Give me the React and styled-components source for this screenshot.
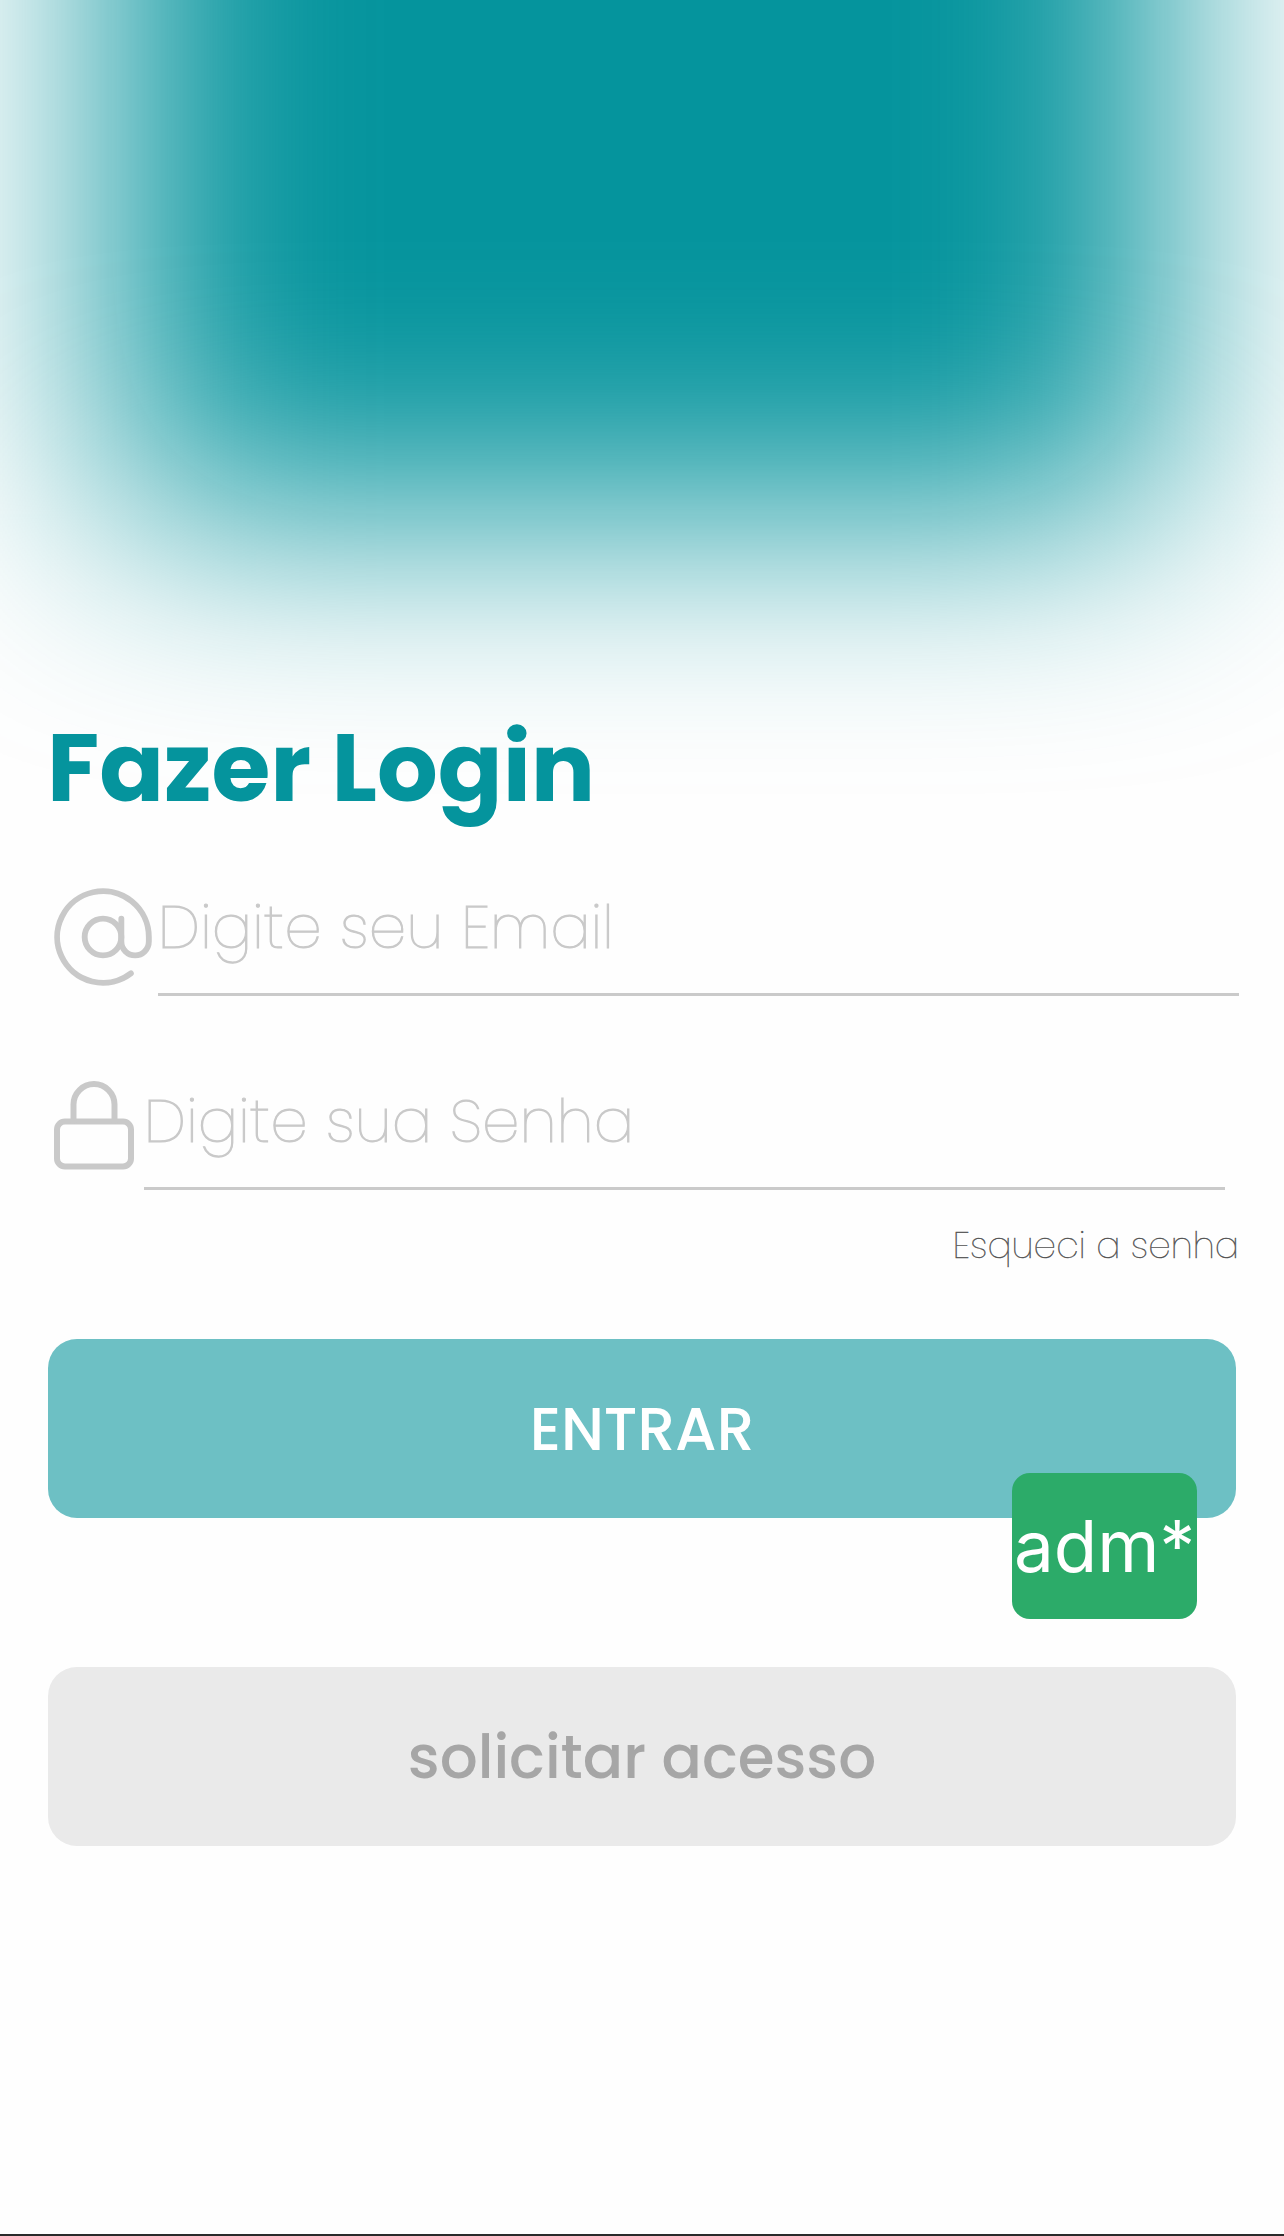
import React from "react";
import styled, { createGlobalStyle } from "styled-components";

const GlobalStyle = createGlobalStyle`
  *, *::before, *::after { box-sizing: border-box; }
  html, body { margin: 0; padding: 0; background: #fff; }
  button { border: 0; padding: 0; font: inherit; cursor: pointer; }
`;

const Page = styled.main`
  position: relative;
  isolation: isolate;
  overflow: hidden;
  width: 1284px;
  height: 2236px;
  padding: 708px 45px 0 48px;
  display: flex;
  flex-direction: column;
  background: #fefefe;
  border-bottom: 2px solid #2a2a2a;
  font-family: Poppins, Inter, "Liberation Sans", sans-serif;
  white-space: nowrap;
`;

const Glow = styled.div`
  position: absolute;
  z-index: -1;
  top: -500px;
  left: 112px;
  width: 1052px;
  height: 1014px;
  background: #05949d;
  filter: blur(117px);
`;

const Title = styled.h1`
  margin: 0 0 54px -1px;
  font-size: 95.5px;
  line-height: 120px;
  font-weight: 700;
  color: #05949d;
`;

const Fields = styled.div`
  display: flex;
  flex-direction: column;
  gap: 80px;
`;

const FieldRow = styled.label`
  display: flex;
  height: 114px;
  color: #c9c9c9;
`;

const FieldText = styled.span`
  width: 1080.5px;
  padding-top: 5px;
  border-bottom: 3px solid #cacaca;
  font-size: 59.8px;
  line-height: 80px;
  font-weight: 200;
  letter-spacing: 0.25px;
  -webkit-text-stroke: 1.1px currentColor;
`;

const Icon = styled.svg`
  flex: none;
  display: block;
  fill: none;
  stroke: currentColor;
  stroke-linecap: round;
  stroke-linejoin: round;
`;

const Forgot = styled.a`
  align-self: flex-end;
  margin: 31px 0 68px;
  font-size: 35.8px;
  line-height: 50px;
  font-weight: 200;
  letter-spacing: 0.1px;
  -webkit-text-stroke: 0.4px currentColor;
  color: #505050;
`;

const Actions = styled.div`
  position: relative;
  width: 1188px;
  display: flex;
  flex-direction: column;
  gap: 149px;
`;

const Button = styled.button`
  height: 179px;
  border-radius: 29px;
  background: ${(p) => (p.$primary ? "#6dc0c4" : "#eaeaea")};
  && {
    color: ${(p) => (p.$primary ? "#fff" : "#a6a6a6")};
    font-size: 59.6px;
    line-height: 180px;
    font-weight: 500;
  }
`;

const AdminBadge = styled.button`
  position: absolute;
  top: 134px;
  left: 964px;
  width: 185px;
  height: 146px;
  border-radius: 18px;
  background: #2cab69;
  && {
    color: #fff;
    font-family: Inter, sans-serif;
    font-size: 71px;
    font-weight: 400;
  }
`;

export default function App() {
  return (
    <>
      <GlobalStyle />
      <Page>
        <Glow />
        <Title>Fazer Login</Title>
        <Fields>
          <FieldRow>
            <Icon width="110" height="110" viewBox="0 0 24 24" strokeWidth="1.28">
              <circle cx="12" cy="12" r="4" />
              <path d="M16 8v5a3 3 0 0 0 6 0v-1a10 10 0 1 0-3.92 7.94" />
            </Icon>
            <FieldText>Digite seu Email</FieldText>
          </FieldRow>
          <FieldRow>
            <Icon width="96" height="110" viewBox="0 0 96 110" strokeWidth="6">
              <rect x="9" y="45.5" width="74" height="45" rx="8" />
              <path d="M25.5 45V28.5a20.5 20.5 0 0 1 41 0V45" />
            </Icon>
            <FieldText>Digite sua Senha</FieldText>
          </FieldRow>
        </Fields>
        <Forgot>Esqueci a senha</Forgot>
        <Actions>
          <Button $primary>ENTRAR</Button>
          <Button>solicitar acesso</Button>
          <AdminBadge>adm*</AdminBadge>
        </Actions>
      </Page>
    </>
  );
}
